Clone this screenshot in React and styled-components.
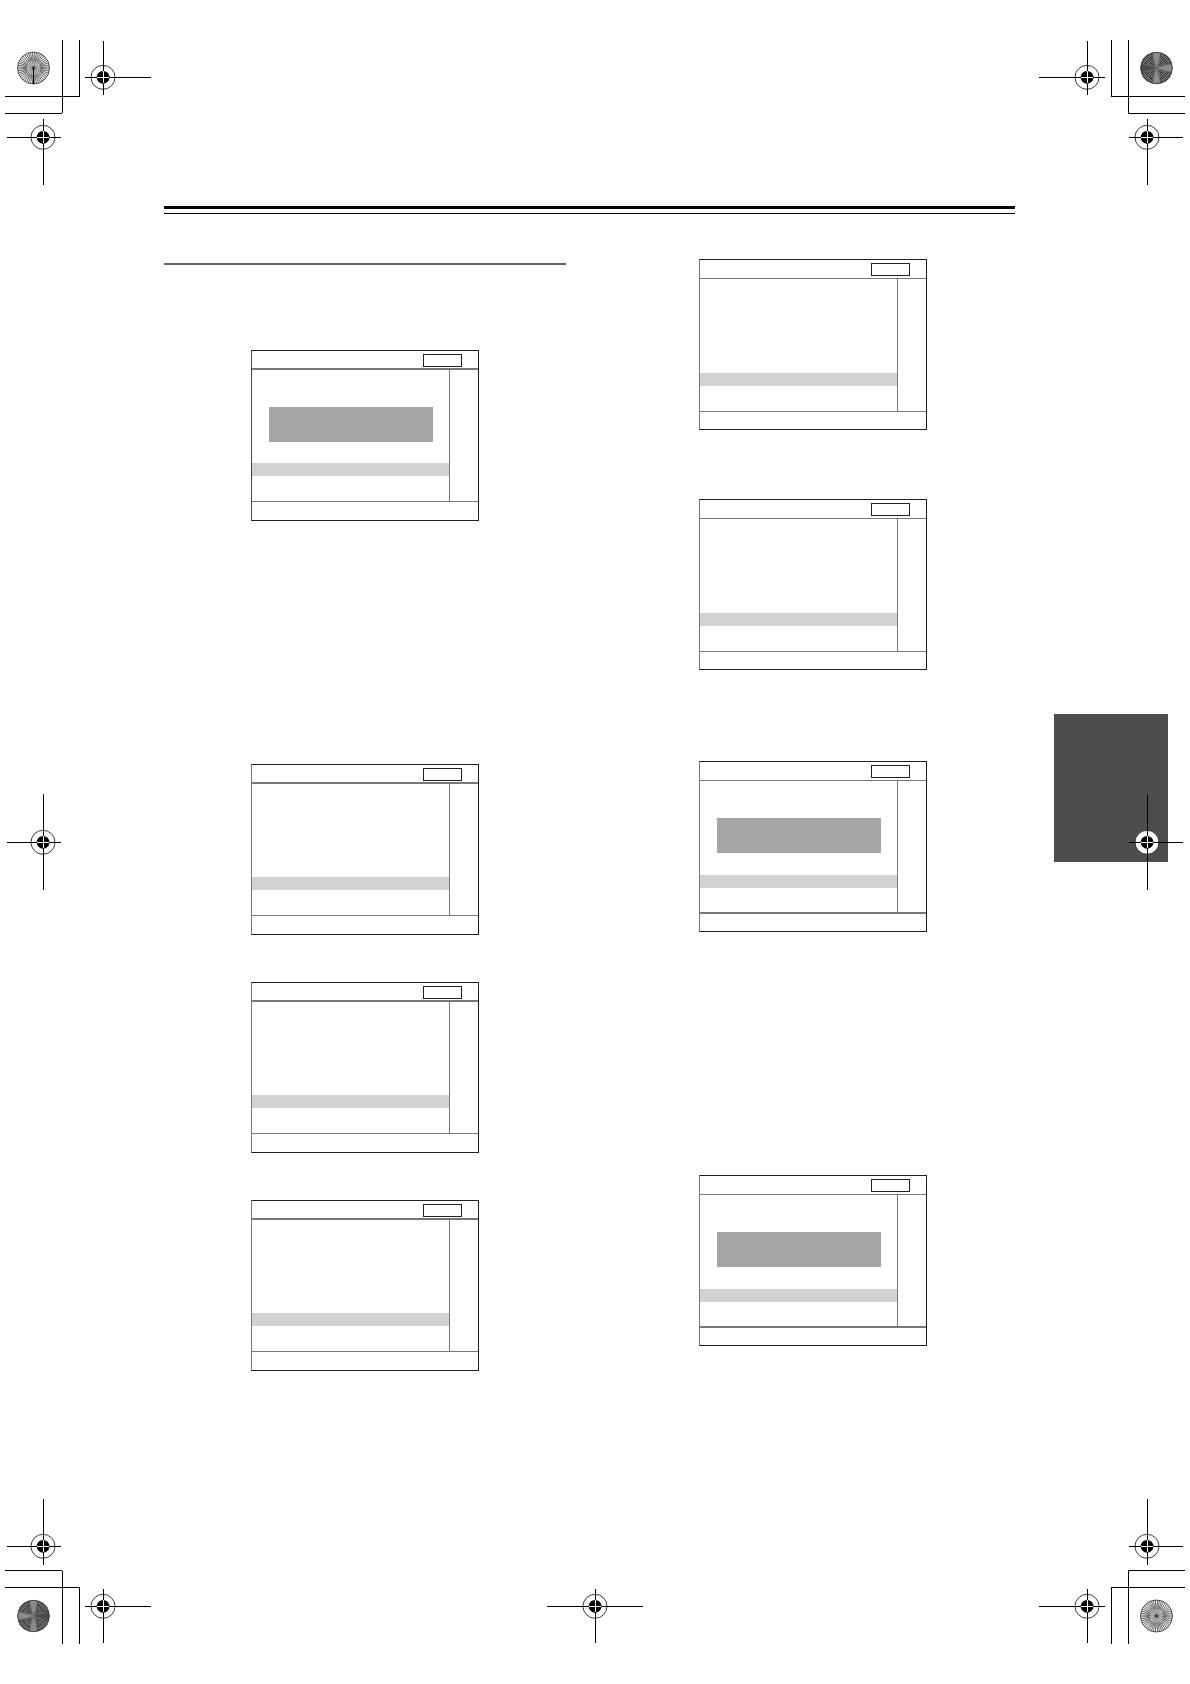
import React from "react";
import styled, { createGlobalStyle } from "styled-components";

const GlobalStyle = createGlobalStyle`
  * {
    box-sizing: border-box;
  }

  body {
    margin: 0;
    background: #fff;
    font-family: "Liberation Sans", Arial, sans-serif;
  }
`;

const Sheet = styled.div`
  min-height: 100vh;
  display: grid;
  grid-template-columns: 164px 1fr 175px;
  grid-template-rows: 206px 1fr 194px;
`;

const Corner = styled.div`
  display: flex;
  justify-content: ${(props) => (props.$end ? "flex-end" : "flex-start")};

  svg {
    display: block;
    flex: none;
  }
`;

const Margin = styled.aside`
  padding-top: ${(props) => props.$top}px;

  svg {
    display: block;
  }
`;

const BottomMargin = styled.div`
  grid-column: 2;
  display: flex;
  justify-content: center;
  padding: 99px 0 0 11px;
`;

const Tab = styled.div`
  position: relative;
  width: 114px;
  height: 148px;
  margin-left: 39px;
  background: #4d4d4d;

  svg {
    position: absolute;
    left: 75px;
    top: 80px;
  }
`;

const Content = styled.main`
  min-width: 0;
`;

const PageRule = styled.div`
  height: 8px;
  border-top: 3px solid #000;
  border-bottom: 1px solid #000;
`;

const Columns = styled.div`
  display: grid;
  grid-template-columns: 1fr 1fr;
  column-gap: 46px;
  padding-right: 1px;
`;

const Column = styled.section`
  display: flex;
  flex-direction: column;
  align-items: center;
  padding-top: ${(props) => props.$top}px;
`;

const SectionRule = styled.div`
  width: 100%;
  height: 2px;
  background: #666;
`;

const ScreenFrame = styled.div`
  width: 228px;
  height: 171px;
  margin-top: ${(props) => props.$before}px;
  display: flex;
  flex-direction: column;
  border: 1px solid #231f20;
  border-left-color: ${(props) => props.$edge};
`;

const ScreenHeader = styled.div`
  height: 19px;
  display: flex;
  justify-content: flex-end;
  padding: 3px 16px 0 0;
  border-bottom: ${(props) => (props.$thick ? 2 : 1)}px solid #777;
`;

const Badge = styled.div`
  width: 39px;
  height: 13px;
  border: 1px solid #231f20;
`;

const ScreenBody = styled.div`
  flex: 1;
  display: flex;
`;

const List = styled.div`
  width: 197px;
  padding-top: 37px;
`;

const Notice = styled.div`
  height: 35px;
  margin: 0 16px 0 17px;
  background: ${(props) => (props.$show ? "#a6a4a5" : "transparent")};
`;

const SelectedRow = styled.div`
  height: 13px;
  margin-top: ${(props) => props.$gap}px;
  background: #d2d2d2;
`;

const SideBar = styled.div`
  flex: 1;
  border-left: 1px solid #777;
`;

const ScreenFooter = styled.div`
  height: ${(props) => props.$height}px;
  border-top: ${(props) => (props.$thick ? 2 : 1)}px solid #777;
`;

const leftScreens = [
  { before: 85, notice: true, edge: "#444" },
  { before: 243 },
  { before: 47 },
  { before: 47 },
];

const rightScreens = [
  { before: 0 },
  { before: 69 },
  { before: 91, notice: true, thickFooter: true },
  { before: 243, notice: true, thickFooter: true },
];

const Screen = ({ before, notice, edge = "#777", thickFooter, thickHeader }) => (
  <ScreenFrame $before={before} $edge={edge}>
    <ScreenHeader $thick={thickHeader}>
      <Badge />
    </ScreenHeader>
    <ScreenBody>
      <List>
        <Notice $show={notice} />
        <SelectedRow $gap={thickHeader ? 21 : 22} />
      </List>
      <SideBar />
    </ScreenBody>
    <ScreenFooter
      $thick={thickFooter}
      $height={thickHeader || thickFooter ? 19 : 18}
    />
  </ScreenFrame>
);

// Registration target; x1..x2 and y1..y2 are the ends of its two hairlines
const Target = ({ x, y, x1, x2, y1, y2 }) => (
  <g>
    <circle cx={x} cy={y + 0.3} r="12" fill="#fff" stroke="#222" strokeWidth="0.9" />
    <path
      d={`M${x1} ${y + 0.5}H${x2}M${x + 0.5} ${y1}V${y2}`}
      stroke="#000"
      shapeRendering="crispEdges"
    />
    <circle cx={x + 0.1} cy={y + 0.3} r="6.4" fill="#000" />
    <path
      d={`M${x - 6} ${y + 0.5}H${x + 6}M${x + 0.5} ${y - 6}V${y + 6}`}
      stroke="#fff"
      shapeRendering="crispEdges"
    />
  </g>
);

const CropLines = ({ d }) => (
  <path d={d} fill="none" stroke="#000" shapeRendering="crispEdges" />
);

const rays = Array.from({ length: 48 }, (_, i) => {
  const a = ((i + 0.5) * Math.PI) / 24;
  const inner = i % 2 ? 7 : 4;
  return `M${Math.cos(a) * inner} ${Math.sin(a) * inner}L${Math.cos(a) * 16} ${Math.sin(a) * 16}`;
}).join("");

const RayDisc = ({ x, y, tail }) => (
  <g transform={`translate(${x} ${y})`}>
    <circle r="16" fill="#fff" stroke="#333" strokeWidth="0.8" />
    <path d={rays} stroke="#111" strokeWidth="0.65" />
    <circle r="6" fill="#aaa" fillOpacity="0.7" />
    <circle r="3.5" fill="#888" fillOpacity="0.8" />
    <circle r="1.4" fill="#222" />
    {tail && <path d="M0 0V16" stroke="#000" />}
  </g>
);

const DarkDisc = ({ x, y, flip }) => (
  <g transform={`translate(${x} ${y}) rotate(${flip ? 180 : 0})`}>
    <circle r="16" fill="#666" />
    {[0, 90, 180, 270].map((angle) => (
      <g key={angle} transform={`rotate(${angle})`} fill="none">
        <path
          d="M4 3Q3 3 3 4M6 4Q4 4 4 6M8 4Q5 5 4 8M11 4Q6 6 4 11M13 4Q8 7 4 14M15 5Q9 9 5 15M14 8Q11 11 8 14"
          stroke="#222"
          strokeWidth="0.9"
        />
        <path
          d="M7 4Q5 5 4 7M10 4Q6 6 4 9M13 5Q8 8 5 13M14 6Q10 10 6 14"
          stroke="#999"
          strokeWidth="0.6"
        />
      </g>
    ))}
    <path
      d="M0 0L-4 -15.5Q0 -16.5 4 -15.5ZM0 0L-4 15.5Q0 16.5 4 15.5ZM0 0L15.5 -4Q16.5 0 15.5 4Z"
      fill="#8c8c8c"
    />
    <path d="M0 0L-15.5 -4Q-16.5 0 -15.5 4Z" fill="#4a4a4a" />
    <circle r="15.7" fill="none" stroke="#333" strokeWidth="0.8" />
  </g>
);

const App = () => {
  return (
    <>
      <GlobalStyle />
      <Sheet>
        <Corner>
          <svg width="164" height="206" viewBox="0 0 164 206" aria-hidden="true">
            <RayDisc x={33.5} y={68} tail />
            <CropLines d="M62.5 40V113M79.5 40V96M5 96.5H80M5 113.5H62" />
            <Target x={103} y={77} x1={85} x2={151} y1={41} y2={95} />
            <Target x={43} y={137} x1={7} x2={61} y1={119} y2={185} />
          </svg>
        </Corner>
        <div />
        <Corner $end>
          <svg width="160" height="206" viewBox="1030 0 160 206" aria-hidden="true">
            <DarkDisc x={1156.5} y={68} />
            <CropLines d="M1111.5 40V97M1128.5 40V114M1111 96.5H1185M1128 113.5H1185" />
            <Target x={1087} y={77} x1={1039} x2={1105} y1={41} y2={95} />
            <Target x={1147} y={137} x1={1129} x2={1183} y1={119} y2={185} />
          </svg>
        </Corner>

        <Margin $top={588}>
          <svg width="64" height="96" viewBox="0 794 64 96" aria-hidden="true">
            <Target x={43} y={842} x1={7} x2={61} y1={794} y2={890} />
          </svg>
        </Margin>
        <Content>
          <PageRule />
          <Columns>
            <Column $top={49}>
              <SectionRule />
              {leftScreens.map((screen, i) => (
                <Screen key={i} thickHeader {...screen} />
              ))}
            </Column>
            <Column $top={45}>
              {rightScreens.map((screen, i) => (
                <Screen key={i} {...screen} />
              ))}
            </Column>
          </Columns>
        </Content>
        <Margin $top={508}>
          <Tab>
            <svg width="54" height="96" viewBox="1129 794 54 96" aria-hidden="true">
              <Target x={1147} y={842} x1={1129} x2={1183} y1={794} y2={890} />
            </svg>
          </Tab>
        </Margin>

        <Corner>
          <svg width="164" height="194" viewBox="0 1490 164 194" aria-hidden="true">
            <DarkDisc x={33.5} y={1616} flip />
            <CropLines d="M5 1570.5H62M5 1587.5H80M62.5 1571V1644M79.5 1587V1644" />
            <Target x={43} y={1546} x1={7} x2={61} y1={1499} y2={1565} />
            <Target x={103} y={1606} x1={85} x2={151} y1={1589} y2={1643} />
          </svg>
        </Corner>
        <BottomMargin>
          <svg width="96" height="54" viewBox="547 1589 96 54" aria-hidden="true">
            <Target x={595} y={1606} x1={547} x2={643} y1={1589} y2={1643} />
          </svg>
        </BottomMargin>
        <Corner $end>
          <svg width="160" height="194" viewBox="1030 1490 160 194" aria-hidden="true">
            <RayDisc x={1156.5} y={1616} />
            <CropLines d="M1128 1570.5H1185M1111 1587.5H1185M1111.5 1587V1644M1128.5 1570V1644" />
            <Target x={1147} y={1546} x1={1129} x2={1183} y1={1499} y2={1565} />
            <Target x={1087} y={1606} x1={1039} x2={1105} y1={1589} y2={1643} />
          </svg>
        </Corner>
      </Sheet>
    </>
  );
};

export default App;
